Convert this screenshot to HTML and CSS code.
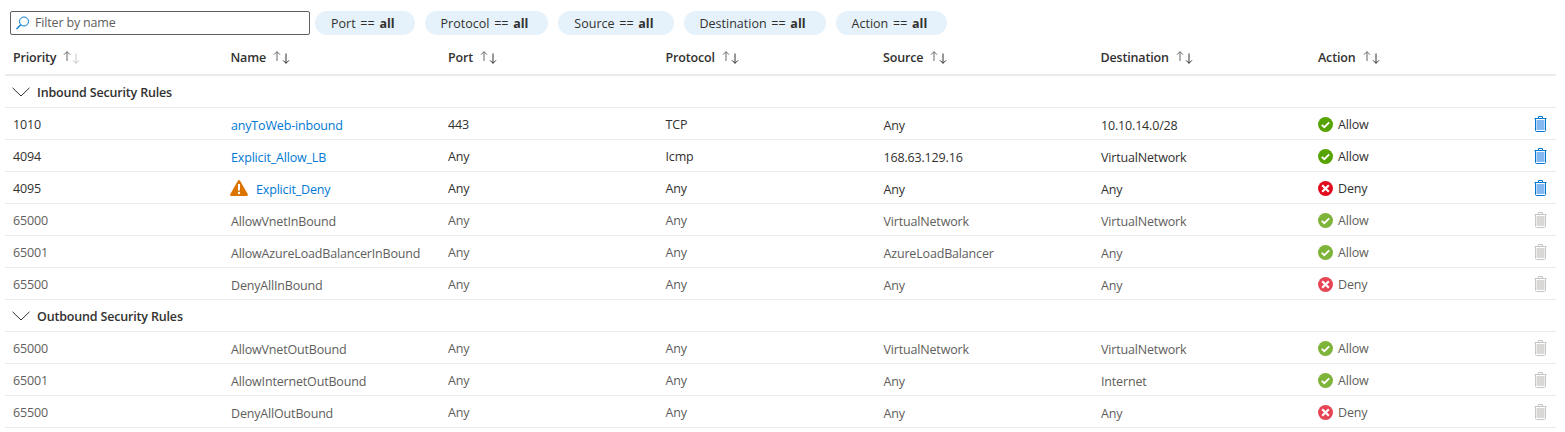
FILE: index.html
```html
<!DOCTYPE html>
<html lang="en">
<head>
<meta charset="utf-8">
<title>Security rules</title>
<link rel="stylesheet" href="styles.css">
</head>
<body>
<svg class="defs" width="0" height="0" aria-hidden="true">
  <symbol id="sort" viewBox="0 0 18 13">
    <path d="M4 10V.7M1 3.700 4 .7l3 3" fill="none" stroke="#6b6967" stroke-width="1"/>
    <path d="M13 2.500v9.800M10 9.300l3 3 3-3" fill="none" stroke="var(--down)" stroke-width="1"/>
  </symbol>
  <symbol id="chev" viewBox="0 0 18 10">
    <path d="M.5.8 9 9l8.500-8.200" fill="none" stroke="currentColor" stroke-width="1"/>
  </symbol>
  <symbol id="trash" viewBox="0 0 13 16">
    <path d="M2.500 4h8v10h-8z" fill="var(--t-fill)"/>
    <path d="M.5 2.500h12M4.500 2.500V.5h4v2M1.500 2.500v12c0 .5.500 1 1 1h8c.5 0 1-.5 1-1v-12" fill="none" stroke="var(--t-line)" stroke-width="1"/>
  </symbol>
  <symbol id="allow" viewBox="0 0 15 15">
    <circle cx="7.500" cy="7.500" r="7.500" fill="currentColor"/>
    <path d="M3.800 7.800 6.300 10.200 11.200 5.300" fill="none" stroke="#fff" stroke-width="1.800"/>
  </symbol>
  <symbol id="deny" viewBox="0 0 15 15">
    <circle cx="7.500" cy="7.500" r="7.500" fill="currentColor"/>
    <path d="M4.200 4.200l6.600 6.600M10.800 4.200l-6.600 6.600" fill="none" stroke="#fff" stroke-width="2.200"/>
  </symbol>
</svg>

<div class="toolbar">
  <div class="filter">
    <svg class="search" width="13" height="14" viewBox="0 0 13 14"><circle cx="8" cy="5.500" r="4.500" fill="none" stroke="#0078d4"/><path d="M4.800 8.700.5 13" stroke="#0078d4" stroke-width="1.300"/></svg>
    <span class="placeholder">Filter by name</span>
  </div>
  <div class="pills">
    <span class="pill">Port == <b>all</b></span>
    <span class="pill">Protocol == <b>all</b></span>
    <span class="pill">Source == <b>all</b></span>
    <span class="pill">Destination == <b>all</b></span>
    <span class="pill">Action == <b>all</b></span>
  </div>
</div>

<div class="table">
  <div class="row head">
    <div class="cell">Priority <svg class="sort first" width="18" height="13"><use href="#sort"/></svg></div>
    <div class="cell">Name <svg class="sort" width="18" height="13"><use href="#sort"/></svg></div>
    <div class="cell">Port <svg class="sort" width="18" height="13"><use href="#sort"/></svg></div>
    <div class="cell">Protocol <svg class="sort" width="18" height="13"><use href="#sort"/></svg></div>
    <div class="cell">Source <svg class="sort" width="18" height="13"><use href="#sort"/></svg></div>
    <div class="cell">Destination <svg class="sort" width="18" height="13"><use href="#sort"/></svg></div>
    <div class="cell">Action <svg class="sort" width="18" height="13"><use href="#sort"/></svg></div>
    <div class="cell"></div>
  </div>

  <div class="group"><svg class="chev" width="18" height="10"><use href="#chev"/></svg>Inbound Security Rules</div>

  <div class="row">
    <div class="cell">1010</div>
    <div class="cell low"><a class="link">anyToWeb-inbound</a></div>
    <div class="cell">443</div>
    <div class="cell">TCP</div>
    <div class="cell low">Any</div>
    <div class="cell low">10.10.14.0/28</div>
    <div class="cell status"><svg class="ok" width="15" height="15"><use href="#allow"/></svg>Allow</div>
    <div class="cell del"><svg class="trash" width="13" height="16"><use href="#trash"/></svg></div>
  </div>
  <div class="row">
    <div class="cell">4094</div>
    <div class="cell low"><a class="link">Explicit_Allow_LB</a></div>
    <div class="cell">Any</div>
    <div class="cell">Icmp</div>
    <div class="cell low">168.63.129.16</div>
    <div class="cell low">VirtualNetwork</div>
    <div class="cell status"><svg class="ok" width="15" height="15"><use href="#allow"/></svg>Allow</div>
    <div class="cell del"><svg class="trash" width="13" height="16"><use href="#trash"/></svg></div>
  </div>
  <div class="row">
    <div class="cell">4095</div>
    <div class="cell low warned">
      <svg class="warn" width="18" height="16" viewBox="0 0 18 16"><path d="M9 0c.5 0 .9.300 1.100.700l7.700 13.500c.4.800-.1 1.800-1.100 1.800H1.300C.3 16-.2 15 .2 14.200L7.900.7C8.100.3 8.500 0 9 0z" fill="#db7500"/><path d="M9 4v6.500" stroke="#fff" stroke-width="2"/><circle cx="9" cy="13" r="1.200" fill="#fff"/></svg>
      <a class="link">Explicit_Deny</a>
    </div>
    <div class="cell">Any</div>
    <div class="cell">Any</div>
    <div class="cell low">Any</div>
    <div class="cell low">Any</div>
    <div class="cell status"><svg class="no" width="15" height="15"><use href="#deny"/></svg>Deny</div>
    <div class="cell del"><svg class="trash" width="13" height="16"><use href="#trash"/></svg></div>
  </div>
  <div class="row dim">
    <div class="cell">65000</div>
    <div class="cell low">AllowVnetInBound</div>
    <div class="cell">Any</div>
    <div class="cell">Any</div>
    <div class="cell low">VirtualNetwork</div>
    <div class="cell low">VirtualNetwork</div>
    <div class="cell status"><svg class="ok" width="15" height="15"><use href="#allow"/></svg>Allow</div>
    <div class="cell del"><svg class="trash" width="13" height="16"><use href="#trash"/></svg></div>
  </div>
  <div class="row dim">
    <div class="cell">65001</div>
    <div class="cell low">AllowAzureLoadBalancerInBound</div>
    <div class="cell">Any</div>
    <div class="cell">Any</div>
    <div class="cell low">AzureLoadBalancer</div>
    <div class="cell low">Any</div>
    <div class="cell status"><svg class="ok" width="15" height="15"><use href="#allow"/></svg>Allow</div>
    <div class="cell del"><svg class="trash" width="13" height="16"><use href="#trash"/></svg></div>
  </div>
  <div class="row dim">
    <div class="cell">65500</div>
    <div class="cell low">DenyAllInBound</div>
    <div class="cell">Any</div>
    <div class="cell">Any</div>
    <div class="cell low">Any</div>
    <div class="cell low">Any</div>
    <div class="cell status"><svg class="no" width="15" height="15"><use href="#deny"/></svg>Deny</div>
    <div class="cell del"><svg class="trash" width="13" height="16"><use href="#trash"/></svg></div>
  </div>

  <div class="group"><svg class="chev" width="18" height="10"><use href="#chev"/></svg>Outbound Security Rules</div>

  <div class="row dim">
    <div class="cell">65000</div>
    <div class="cell low">AllowVnetOutBound</div>
    <div class="cell">Any</div>
    <div class="cell">Any</div>
    <div class="cell low">VirtualNetwork</div>
    <div class="cell low">VirtualNetwork</div>
    <div class="cell status"><svg class="ok" width="15" height="15"><use href="#allow"/></svg>Allow</div>
    <div class="cell del"><svg class="trash" width="13" height="16"><use href="#trash"/></svg></div>
  </div>
  <div class="row dim">
    <div class="cell">65001</div>
    <div class="cell low">AllowInternetOutBound</div>
    <div class="cell">Any</div>
    <div class="cell">Any</div>
    <div class="cell low">Any</div>
    <div class="cell low">Internet</div>
    <div class="cell status"><svg class="ok" width="15" height="15"><use href="#allow"/></svg>Allow</div>
    <div class="cell del"><svg class="trash" width="13" height="16"><use href="#trash"/></svg></div>
  </div>
  <div class="row dim">
    <div class="cell">65500</div>
    <div class="cell low">DenyAllOutBound</div>
    <div class="cell">Any</div>
    <div class="cell">Any</div>
    <div class="cell low">Any</div>
    <div class="cell low">Any</div>
    <div class="cell status"><svg class="no" width="15" height="15"><use href="#deny"/></svg>Deny</div>
    <div class="cell del"><svg class="trash" width="13" height="16"><use href="#trash"/></svg></div>
  </div>
</div>
</body>
</html>
```

FILE: styles.css
```css
html, body {
  margin: 0;
  padding: 0;
  background: #fff;
}
body {
  font-family: "Open Sans", "Noto Sans", sans-serif;
  font-size: 12.5px;
  letter-spacing: -0.17px;
  color: #323130;
  overflow: hidden;
  --down: #323130;
  --t-fill: #83b9f0;
  --t-line: #0078d4;
}
.defs {
  position: absolute;
}
.toolbar {
  display: flex;
  gap: 5px;
  padding: 11px 0 0 10px;
  height: 24px;
}
.filter {
  box-sizing: border-box;
  width: 300px;
  height: 24px;
  display: flex;
  align-items: center;
  gap: 6px;
  padding-left: 5px;
  border: 1px solid #605e5c;
  border-radius: 2px;
}
.placeholder {
  color: #605e5c;
  margin-top: -1px;
}
.search {
  flex: none;
}
.pills {
  display: flex;
  gap: 10px;
}
.pill {
  height: 24px;
  line-height: 25px;
  padding: 0 20px 0 16px;
  border-radius: 12px;
  background: #e6f2fb;
  white-space: nowrap;
  letter-spacing: 0;
  word-spacing: 1.5px;
}
.pill b {
  font-weight: 700;
}
.table {
  margin-left: 5px;
  width: 1551px;
}
.row {
  display: grid;
  grid-template-columns: repeat(6, 217.5px) 1fr 38px;
  height: 32px;
  box-sizing: border-box;
  border-bottom: 1px solid #edebe9;
  align-items: center;
}
.cell {
  padding-left: 8px;
  white-space: nowrap;
  margin-top: 1px;
}
.low {
  padding-left: 8.5px;
  margin-top: 3px;
}
.head {
  height: 41px;
  border-bottom: 2px solid #edebe9;
  font-weight: 600;
  padding-top: 5px;
}
.sort {
  vertical-align: -2px;
  margin-left: 4px;
}
.first {
  --down: #c8c6c4;
}
.group {
  height: 32px;
  box-sizing: border-box;
  border-bottom: 1px solid #edebe9;
  display: flex;
  align-items: center;
  gap: 7px;
  padding: 2px 0 0 7px;
  font-weight: 600;
}
.chev {
  color: #323130;
  margin-top: -2px;
}
.link {
  color: #0078d4;
}
.warned {
  display: flex;
  align-items: center;
  gap: 8px;
  padding-left: 7.5px;
}
.warned .warn {
  margin-top: -3px;
}
.status {
  display: flex;
  align-items: center;
  gap: 5px;
}
.ok {
  color: #57a300;
}
.no {
  color: #e00b1c;
}
.del {
  display: flex;
  padding-left: 16px;
  margin-top: 0;
}
.dim {
  color: #605e5c;
  --t-fill: #d9d8d6;
  --t-line: #c8c6c4;
}
.dim .ok {
  color: #7fb43a;
}
.dim .no {
  color: #e64553;
}
```
